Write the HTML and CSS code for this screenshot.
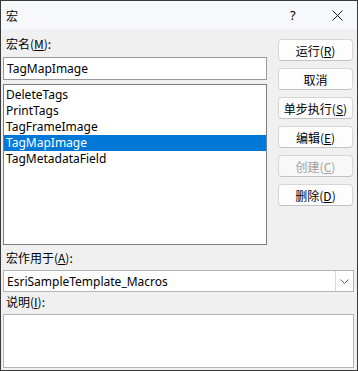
FILE: index.html
```html
<!DOCTYPE html>
<html lang="zh-CN">
<head>
    <meta charset="UTF-8">
    <title>宏</title>
    <link rel="stylesheet" href="styles.css">
</head>
<body>
    <div id="window">

    <div id="titlebar">
        <span class="title">宏</span>
        <span class="help">?</span>
        <span class="close">
            <svg width="11" height="11" viewBox="0 0 11 11"><path d="M0.5 0.5 L10.5 10.5 M10.5 0.5 L0.5 10.5" stroke="#1a1a1a" stroke-width="1" fill="none"/></svg>
        </span>
    </div>

    <div id="content">

    <div id="top">

    <div id="left">
        <p class="label">宏名(<u>M</u>):</p>
        <div class="textbox">TagMapImage</div>
        <ul id="macros">
            <li>DeleteTags</li>
            <li>PrintTags</li>
            <li>TagFrameImage</li>
            <li class="selected">TagMapImage</li>
            <li>TagMetadataField</li>
        </ul>
    </div>

    <div id="buttons">
        <button>运行(<u>R</u>)</button>
        <button>取消</button>
        <button>单步执行(<u>S</u>)</button>
        <button>编辑(<u>E</u>)</button>
        <button class="disabled">创建(<u>C</u>)</button>
        <button>删除(<u>D</u>)</button>
    </div>

    </div>

    <p class="label">宏作用于(<u>A</u>):</p>
    <div class="combo">
        <span class="combo-text">EsriSampleTemplate_Macros</span>
        <span class="combo-arrow">
            <svg width="9" height="5" viewBox="0 0 9 5"><path d="M0.5 0.5 L4.5 4.5 L8.5 0.5" stroke="#606060" stroke-width="1" fill="none"/></svg>
        </span>
    </div>

    <p class="label">说明(<u>I</u>):</p>
    <div class="description"></div>

    </div>

    </div>
</body>
</html>
```

FILE: styles.css
```css
body{
    margin: 0px;
    font-family: "Noto Sans", "Noto Sans CJK SC", sans-serif;
    font-size: 12px;
    color: #000;
}
#window{
    width: 356px;
    height: 369px;
    border: 1px solid #3a3a3a;
    background-color: #f0f0f0;
    display: flex;
    flex-direction: column;
}
#titlebar{
    height: 28px;
    background-color: #f6f8fb;
    display: flex;
    align-items: center;
    padding-left: 5px;
}
.title{
    flex: 1;
    font-family: "Noto Sans CJK SC", sans-serif;
}
.help{
    width: 12px;
    font-size: 13px;
    margin-right: 30px;
}
.close{
    width: 11px;
    margin-right: 14px;
    display: flex;
}
#content{
    padding: 7px 2px 0 2px;
}
#top{
    display: flex;
}
#left{
    width: 264px;
}
.label{
    margin: 0;
    height: 16px;
    line-height: 16px;
    padding-left: 3px;
    font-family: "Noto Sans CJK SC", sans-serif;
}
.textbox{
    margin-top: 5px;
    height: 21px;
    line-height: 21px;
    border: 1px solid #9a9a9a;
    background-color: white;
    padding-left: 3px;
}
#macros{
    list-style: none;
    margin: 4px 0 0 0;
    padding: 2px 0 0 0;
    height: 157px;
    border: 1px solid #7e7e7e;
    background-color: white;
}
#macros li{
    height: 16px;
    line-height: 16px;
    padding-left: 2px;
}
#macros .selected{
    background-color: #0078d7;
    color: white;
}
#buttons{
    margin-left: 11px;
    margin-top: 3px;
    width: 75px;
    display: flex;
    flex-direction: column;
    gap: 7px;
}
button{
    height: 22px;
    padding: 0;
    background-color: #fdfdfd;
    border: 1px solid #d6d6d6;
    border-bottom-color: #c2c2c2;
    border-radius: 4px;
    font-family: "Noto Sans CJK SC", sans-serif;
    font-size: 12px;
    color: #000;
}
button.disabled{
    background-color: #f8f8f8;
    color: #a0a0a0;
}
#content > .label{
    margin-top: 5px;
}
.combo{
    margin-top: 4px;
    height: 20px;
    width: 349px;
    border: 1px solid #b4b4b4;
    background-color: white;
    display: flex;
    align-items: center;
}
.combo-text{
    flex: 1;
    padding-left: 3px;
}
.combo-arrow{
    width: 17px;
    height: 20px;
    border-left: 1px solid #d9d9d9;
    display: flex;
    align-items: center;
    justify-content: center;
}
#content > .label + .description{
    margin-top: 4px;
}
.description{
    height: 52px;
    width: 349px;
    border: 1px solid #b4b4b4;
    background-color: white;
}
#content > .combo + .label{
    margin-top: 2px;
}
```
